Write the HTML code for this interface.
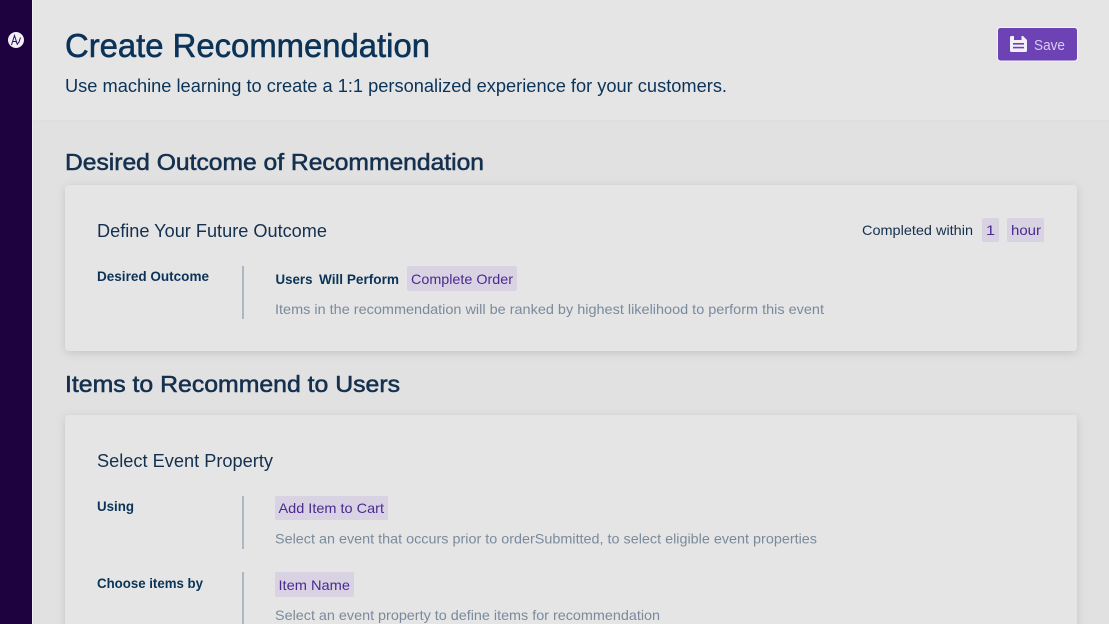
<!DOCTYPE html>
<html lang="en"><head><meta charset="utf-8"><title>Create Recommendation</title>
<style>
html,body{margin:0;padding:0;width:1109px;height:624px;overflow:hidden;background:#e1e1e1}
svg{display:block;position:absolute;left:0;top:0}
text{font-family:"Liberation Sans",sans-serif}
.navy{fill:#0b3358}
.dark{fill:#15304f}
.grey{fill:#7a8a9c}
.pur{fill:#4a2a90}
.med{stroke-width:.55px}
</style></head><body>
<svg width="1109" height="624" viewBox="0 0 1109 624" xmlns="http://www.w3.org/2000/svg">
<defs>
<filter id="s" x="-5%" y="-15%" width="110%" height="130%"><feDropShadow dx="0" dy="2" stdDeviation="4.5" flood-color="#000" flood-opacity=".13"/></filter>
<linearGradient id="hs" x1="0" y1="0" x2="0" y2="1"><stop offset="0" stop-color="#dedede"/><stop offset="1" stop-color="#e1e1e1"/></linearGradient>
</defs>
<rect width="1109" height="624" fill="#e1e1e1"/>
<rect x="33" y="0" width="1076" height="120" fill="#e5e5e5"/>
<rect x="33" y="120" width="1076" height="3" fill="url(#hs)"/>
<rect x="0" y="0" width="32" height="624" fill="#1e0240"/>
<rect x="32" y="0" width="1" height="624" fill="#f0f0f0"/>
<circle cx="16" cy="40" r="8" fill="#f2f0f4"/>
<path d="M11.500 45 L14.500 35.500 L17.500 45 M12.500 41.500 H16 Q17.500 45 19 42 L20.500 37.500" fill="none" stroke="#2a1060" stroke-width="1"/>

<text x="65" y="57" font-size="33" textLength="365" lengthAdjust="spacingAndGlyphs" class="navy med" stroke="#0b3358">Create Recommendation</text>
<text x="65" y="92" font-size="18" textLength="662" lengthAdjust="spacingAndGlyphs" class="navy">Use machine learning to create a 1:1 personalized experience for your customers.</text>

<rect x="997.500" y="27.500" width="80" height="33.500" rx="3" fill="#6d42b4" stroke="#f2f2f2"/>
<path d="M1010 37.500 a1.500 1.500 0 0 1 1.500-1.500 H1023 L1027 40 V50.500 a1.500 1.500 0 0 1-1.500 1.500 H1011.500 a1.500 1.500 0 0 1-1.500-1.500 Z" fill="#f3effa"/>
<rect x="1014" y="36" width="7.500" height="4" fill="#6d42b4"/>
<rect x="1013" y="43" width="11" height="1.600" fill="#6d42b4"/>
<rect x="1013" y="46.800" width="11" height="1.600" fill="#6d42b4"/>
<text x="1034" y="50" font-size="14.500" textLength="31" lengthAdjust="spacingAndGlyphs" fill="#d9cdf0">Save</text>

<text x="65" y="170" font-size="23" textLength="419" lengthAdjust="spacingAndGlyphs" class="dark med" stroke="#15304f">Desired Outcome of Recommendation</text>

<rect x="65" y="185" width="1012" height="166" rx="4" fill="#e5e5e5" filter="url(#s)"/>
<text x="97" y="237" font-size="18" textLength="230" lengthAdjust="spacingAndGlyphs" class="dark">Define Your Future Outcome</text>
<text x="862" y="235" font-size="14" textLength="111" lengthAdjust="spacingAndGlyphs" class="dark">Completed within</text>
<rect x="982" y="218" width="17" height="24" rx="2" fill="#d9d2e3"/>
<text x="986" y="235" font-size="14" textLength="9" lengthAdjust="spacingAndGlyphs" class="pur">1</text>
<rect x="1007" y="218" width="37" height="24" rx="2" fill="#d9d2e3"/>
<text x="1011" y="235" font-size="14" textLength="30" lengthAdjust="spacingAndGlyphs" class="pur">hour</text>

<text x="97" y="281" font-size="14" font-weight="700" textLength="112" lengthAdjust="spacingAndGlyphs" class="navy">Desired Outcome</text>
<rect x="242" y="266" width="2" height="53" fill="#abb7c4"/>
<text x="275.500" y="284" font-size="14" font-weight="700" textLength="37" lengthAdjust="spacingAndGlyphs" class="navy">Users</text>
<text x="319" y="284" font-size="14" font-weight="700" textLength="80" lengthAdjust="spacingAndGlyphs" class="navy">Will Perform</text>
<rect x="407" y="266" width="110" height="25" rx="2" fill="#d9d2e3"/>
<text x="411" y="284" font-size="14" textLength="102" lengthAdjust="spacingAndGlyphs" class="pur">Complete Order</text>
<text x="275" y="314" font-size="14" textLength="549" lengthAdjust="spacingAndGlyphs" class="grey">Items in the recommendation will be ranked by highest likelihood to perform this event</text>

<text x="65" y="392" font-size="23" textLength="335" lengthAdjust="spacingAndGlyphs" class="dark med" stroke="#15304f">Items to Recommend to Users</text>

<rect x="65" y="415" width="1012" height="240" rx="4" fill="#e5e5e5" filter="url(#s)"/>
<text x="97" y="467" font-size="18" textLength="176" lengthAdjust="spacingAndGlyphs" class="dark">Select Event Property</text>

<text x="97" y="511" font-size="14" font-weight="700" textLength="37" lengthAdjust="spacingAndGlyphs" class="navy">Using</text>
<rect x="242" y="496" width="2" height="53" fill="#abb7c4"/>
<rect x="275" y="496" width="113" height="24" rx="2" fill="#d9d2e3"/>
<text x="278.500" y="513" font-size="14" textLength="105.500" lengthAdjust="spacingAndGlyphs" class="pur">Add Item to Cart</text>
<text x="275" y="543.500" font-size="14" textLength="542" lengthAdjust="spacingAndGlyphs" class="grey">Select an event that occurs prior to orderSubmitted, to select eligible event properties</text>

<text x="97" y="588" font-size="14" font-weight="700" textLength="106" lengthAdjust="spacingAndGlyphs" class="navy">Choose items by</text>
<rect x="242" y="572" width="2" height="52" fill="#abb7c4"/>
<rect x="275" y="572" width="79" height="25" rx="2" fill="#d9d2e3"/>
<text x="278.500" y="590" font-size="14" textLength="71.500" lengthAdjust="spacingAndGlyphs" class="pur">Item Name</text>
<text x="275" y="620" font-size="14" textLength="385" lengthAdjust="spacingAndGlyphs" class="grey">Select an event property to define items for recommendation</text>
</svg>
</body></html>
